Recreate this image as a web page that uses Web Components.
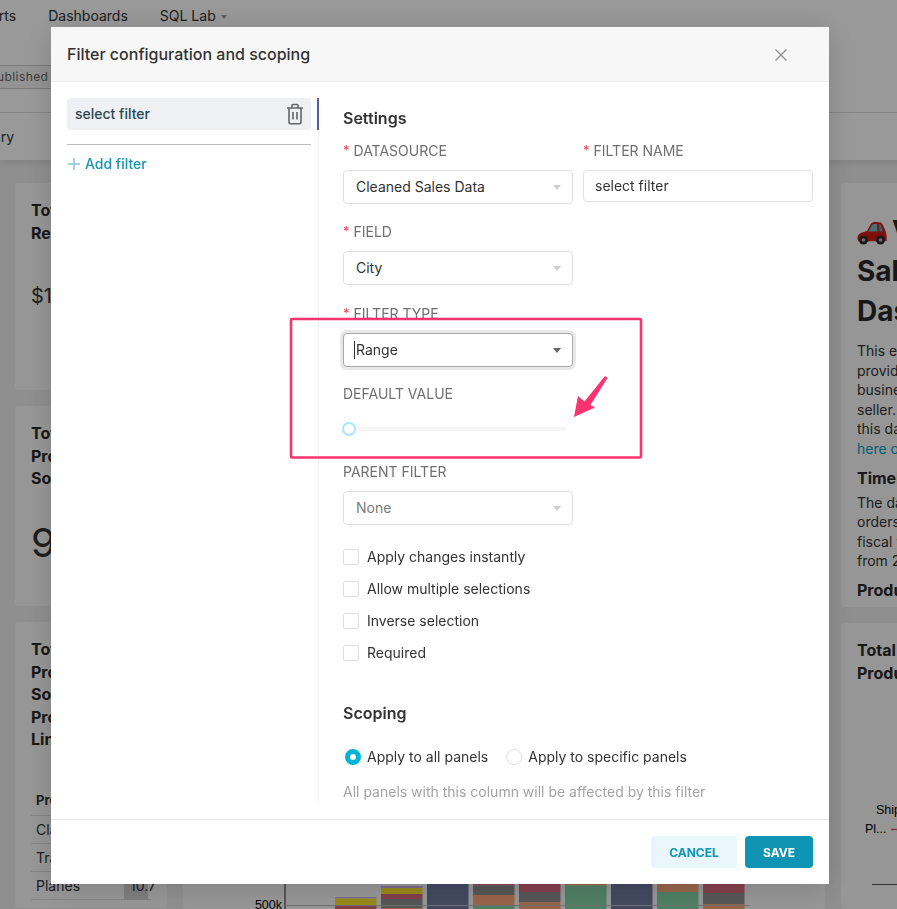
<!DOCTYPE html>
<html lang="en">
<head>
<meta charset="utf-8">
<title>Filter configuration and scoping</title>
<style>
    html, body { margin: 0; height: 909px; overflow: hidden; background: #efefef; }
    body { font-family: Inter, "Noto Sans", sans-serif; color: #323232; }
</style>
</head>
<body>
<dash-page>
    <dash-card slot="left" style="height:207px">
        <span slot="title">Total<br>Revenue</span>
        <div style="font-size:20px;line-height:28px;margin-top:38px;color:#323232">$10.0M</div>
    </dash-card>
    <dash-card slot="left" style="height:200px">
        <span slot="title">Total<br>Products<br>Sold</span>
        <div style="font-size:40px;line-height:50px;margin-top:28px;color:#323232">98K</div>
    </dash-card>
    <dash-card slot="left" style="height:286px">
        <span slot="title">Total<br>Products<br>Sold by<br>Product<br>Line</span>
        <product-table></product-table>
    </dash-card>

    <dash-card slot="middle" style="height:424px"><span slot="title"></span></dash-card>
    <dash-card slot="middle" style="height:286px"><stacked-chart></stacked-chart></dash-card>

    <dash-card slot="right" style="height:424px">
        <readme-panel></readme-panel>
    </dash-card>
    <dash-card slot="right" style="height:286px">
        <span slot="title">Total Sales by<br>Product Line</span>
        <pie-labels></pie-labels>
    </dash-card>
</dash-page>

<filter-modal></filter-modal>
<annotation-callout></annotation-callout>

<script>
// Dimmed dashboard behind the modal
class DashPage extends HTMLElement {
    constructor() {
        super();
        this.attachShadow({ mode: 'open' });
    }

    connectedCallback() {
        this.shadowRoot.innerHTML = `
            <style>
                :host { display: block; width: 1120px; font-size: 14px; }
                .top { background: #fff; height: 112px; border-bottom: 1px solid #dcdcdc; box-sizing: content-box; overflow: hidden; }
                nav { display: flex; gap: 32px; margin-left: -27.5px; padding-top: 6px; line-height: 20px; color: #323232; }
                .caret { display: inline-block; margin-left: 5px; vertical-align: middle; border: 3.5px solid transparent; border-top: 4px solid #999; border-bottom: 0; }
                .tag { display: inline-block; margin: 39px 0 0 -23px; padding: 0 4px 0 11px; width: 63px; height: 22px; line-height: 22px; border: 1px solid #ccc; border-radius: 3px; font-size: 12px; letter-spacing: .4px; color: #666; background: #f5f5f5; overflow: hidden; white-space: nowrap; }
                .tabs { background: #fff; height: 47px; line-height: 48px; margin-left: 0; box-shadow: 0 4px 6px rgba(0,0,0,.08); position: relative; overflow: hidden; }
                .tabs span { display: block; margin-left: -49px; }
                .grid { display: grid; grid-template-columns: 152px 642px 260px; gap: 16px; padding: 23px 0 0 15px; }
                .col { display: flex; flex-direction: column; gap: 16px; }
            </style>
            <div class="top">
                <nav><span>Charts</span><span>Dashboards</span><span>SQL Lab<i class="caret"></i></span></nav>
                <div class="tag">Published</div>
            </div>
            <div class="tabs"><span>Summary</span></div>
            <div class="grid">
                <div class="col"><slot name="left"></slot></div>
                <div class="col"><slot name="middle"></slot></div>
                <div class="col"><slot name="right"></slot></div>
            </div>
        `;
    }
}

class DashCard extends HTMLElement {
    constructor() {
        super();
        this.attachShadow({ mode: 'open' });
    }

    connectedCallback() {
        this.shadowRoot.innerHTML = `
            <style>
                :host { display: block; background: #fbfbfb; border-radius: 4px; padding: 16px; box-sizing: border-box; overflow: hidden; }
                .title { font-size: 16px; font-weight: 700; line-height: 22.5px; color: #282828; }
            </style>
            <div class="title"><slot name="title"></slot></div>
            <slot></slot>
        `;
    }
}

class ProductTable extends HTMLElement {
    constructor() {
        super();
        this.attachShadow({ mode: 'open' });
    }

    connectedCallback() {
        const rows = [['Classic Cars', '39.1'], ['Trains', '2.9'], ['Planes', '10.7']];
        this.shadowRoot.innerHTML = `
            <style>
                :host { display: block; margin-top: 35px; font-size: 14px; color: #323232; }
                .row { display: grid; grid-template-columns: 93px 27px; border-bottom: 1px solid #dcdcdc; height: 27px; box-sizing: content-box; line-height: 28px; }
                .row > div { padding-left: 5px; white-space: nowrap; overflow: hidden; }
                .head { font-weight: 700; font-size: 13px; height: 29px; }
                .num { background: #d2d2d2; width: 24px; box-sizing: border-box; padding-left: 6px !important; overflow: visible !important; }
            </style>
            <div class="row head"><div>Product</div><div>SUM</div></div>
            ${rows.map(([name, value]) => `
                <div class="row"><div>${name}</div><div class="num">${value}</div></div>
            `).join('')}
        `;
    }
}

class StackedChart extends HTMLElement {
    constructor() {
        super();
        this.attachShadow({ mode: 'open' });
    }

    connectedCallback() {
        const C = { n: '#707ba0', g: '#85d5a7', o: '#fca87b', r: '#dc697f', k: '#919191', y: '#ffe62b', p: '#ccb1f0' };
        // [x, [colour, top, bottom]...] in page pixels
        const bars = [
            [335, [['p', 897, 898.5], ['y', 898.5, 906], ['r', 906, 909]]],
            [381, [['p', 886, 888], ['y', 888, 894], ['r', 894, 899], ['k', 899, 908], ['o', 908, 909]]],
            [427, [['n', 880, 909]]],
            [473, [['r', 880, 885.5], ['k', 885.5, 895], ['o', 895, 906], ['g', 906, 909]]],
            [519, [['r', 880, 892], ['k', 892, 902], ['o', 902, 909]]],
            [565, [['o', 880, 885.5], ['g', 885.5, 909]]],
            [611, [['n', 880, 909]]],
            [657, [['o', 880, 892], ['g', 892, 909]]],
            [703, [['r', 880, 893], ['k', 893, 904], ['o', 904, 909]]],
        ];
        const rects = bars.map(([x, segs]) => segs.map(([c, a, b]) =>
            `<rect x="${x}" y="${a}" width="41.5" height="${b - a}" fill="${C[c]}"/>`).join('')).join('');
        this.shadowRoot.innerHTML = `
            <style>
                :host { display: block; margin: -16px; }
                svg { display: block; }
                text { font: 12.5px "Liberation Sans", Arial, sans-serif; fill: #000; }
            </style>
            <svg width="642" height="286" viewBox="183 623 642 286">
                <line x1="285" y1="640" x2="285" y2="909" stroke="#222" stroke-width="1"/>
                ${rects}
                <line x1="285" y1="905.5" x2="749" y2="905.5" stroke="#bbb" stroke-width="1"/>
                <text x="282" y="909" text-anchor="end">500k</text>
            </svg>
        `;
    }
}

class ReadmePanel extends HTMLElement {
    constructor() {
        super();
        this.attachShadow({ mode: 'open' });
    }

    connectedCallback() {
        this.shadowRoot.innerHTML = `
            <style>
                :host { display: block; font-size: 14px; line-height: 19.6px; color: #323232; white-space: nowrap; }
                h1 { margin: 12px 0 0; font-size: 28px; line-height: 40px; font-weight: 700; color: #282828; }
                h1 svg { vertical-align: -4px; margin-right: 5px; }
                p { margin: 10px 0 0; }
                h2 { margin: 8px 0 0; font-size: 16px; line-height: 22px; font-weight: 700; color: #282828; }
                h2 + p { margin-top: 4px; }
                a { color: #00a0c0; text-decoration: none; }
            </style>
            <h1><svg width="30" height="24" viewBox="0 0 30 24">
                <path d="M.5 18 C.5 14 2 12.5 5 11.5 L10 10 L13.5 3.5 C14.5 1.5 16 1 19 1 L23.5 1.5 C25.5 2 27 6 28.5 10 C29.7 13 30 16 29.5 20 L1.5 20.5 Z" fill="#d11b14"/>
                <path d="M11.5 10.5 L15 4 C15.7 3 17 3 18.5 3 L20 3 L20.5 10.5 Z" fill="#6fc0cc"/>
                <path d="M22 3 L23.5 3.5 L26 10.5 L22.5 10.5 Z" fill="#5aa5b5"/>
                <circle cx="6.5" cy="19" r="4.5" fill="#2b2b2b"/><circle cx="6.5" cy="19" r="1.8" fill="#bbb"/>
                <circle cx="23.5" cy="19" r="4.5" fill="#2b2b2b"/><circle cx="23.5" cy="19" r="1.8" fill="#bbb"/>
            </svg>Vehicle<br>Sales<br>Dashboard</h1>
            <p>This example dashboard<br>provides insight into the<br>business operations of a vehicle<br>seller. The dataset powering<br>this dashboard can be found<br><a href="#">here on Kaggle</a>.</p>
            <h2>Timeline</h2>
            <p>The dataset contains<br>orders across the<br>fiscal years, ranging<br>from 2003 to 2005.</p>
            <h2>Product Lines</h2>
        `;
    }
}

class PieLabels extends HTMLElement {
    constructor() {
        super();
        this.attachShadow({ mode: 'open' });
    }

    connectedCallback() {
        this.shadowRoot.innerHTML = `
            <style>
                :host { display: block; margin-left: -16px; }
                svg { display: block; }
                text { font: 12.5px "Liberation Sans", Arial, sans-serif; fill: #000; }
            </style>
            <svg width="260" height="225" viewBox="841 684 260 225">
                <text x="876" y="814">Ships</text>
                <text x="865" y="833">Pl...</text>
                <line x1="891" y1="829.5" x2="910" y2="829.5" stroke="#e0607c" stroke-width="1.3"/>
                <line x1="872" y1="884.5" x2="910" y2="884.5" stroke="#555" stroke-width="1"/>
            </svg>
        `;
    }
}

// Form bits used inside the modal
class FormLabel extends HTMLElement {
    constructor() {
        super();
        this.attachShadow({ mode: 'open' });
    }

    connectedCallback() {
        const req = this.hasAttribute('required');
        this.shadowRoot.innerHTML = `
            <style>
                :host { display: block; font-size: 14px; line-height: 20px; height: 20px; color: #6f6f6f; white-space: nowrap; }
                .star { color: #e04355; margin-right: 4px; font-size: 13px; line-height: 0; vertical-align: 1px; }
            </style>
            ${req ? '<span class="star">*</span>' : ''}<slot></slot>
        `;
    }
}

class ModalSelect extends HTMLElement {
    constructor() {
        super();
        this.attachShadow({ mode: 'open' });
    }

    connectedCallback() {
        this.shadowRoot.innerHTML = `
            <style>
                :host { display: flex; align-items: center; box-sizing: border-box; width: 230px; height: 34px; padding: 0 12px; margin-top: 9px; border: 1px solid #e0e0e0; border-radius: 4px; background: #fff; font-size: 14px; color: #323232; position: relative; }
                :host([focused]) { border-color: #a8a8a8; box-shadow: 0 0 0 3px #e8e8e8; }
                :host([disabled]) { background: #fff; color: #7a7a7a; }
                .text { flex: 1; padding-bottom: 2px; }
                .cursor { position: absolute; left: 10px; top: 7px; width: 1px; height: 18px; background: #323232; display: none; }
                :host([focused]) .cursor { display: block; }
                .caret { width: 0; height: 0; margin-right: -1px; border: 4.5px solid transparent; border-top: 5px solid #cfcfcf; border-bottom: 0; }
                :host([focused]) .caret { border-top-color: #666; }
            </style>
            <i class="cursor"></i>
            <span class="text"><slot></slot></span>
            <i class="caret"></i>
        `;
    }
}

class CheckRow extends HTMLElement {
    constructor() {
        super();
        this.attachShadow({ mode: 'open' });
    }

    connectedCallback() {
        this.shadowRoot.innerHTML = `
            <style>
                :host { display: flex; align-items: center; gap: 8px; height: 16px; font-size: 14px; color: #323232; white-space: nowrap; }
                .box { width: 16px; height: 16px; box-sizing: border-box; border: 1px solid #e0e0e0; border-radius: 2px; background: #fff; }
                .text { margin-top: -2px; }
            </style>
            <i class="box"></i><span class="text"><slot></slot></span>
        `;
    }
}

class RadioChoice extends HTMLElement {
    constructor() {
        super();
        this.attachShadow({ mode: 'open' });
    }

    connectedCallback() {
        this.shadowRoot.innerHTML = `
            <style>
                :host { display: inline-flex; align-items: center; gap: 6px; height: 16px; padding-left: 2px; font-size: 14px; color: #323232; white-space: nowrap; }
                .dot { width: 16px; height: 16px; box-sizing: border-box; border-radius: 50%; border: 1.5px solid #e0e0e0; background: #fff; }
                :host([checked]) .dot { border: 5px solid #00b4d8; }
                .text { margin-top: -2px; }
            </style>
            <i class="dot"></i><span class="text"><slot></slot></span>
        `;
    }
}

class RangeSlider extends HTMLElement {
    constructor() {
        super();
        this.attachShadow({ mode: 'open' });
    }

    connectedCallback() {
        this.shadowRoot.innerHTML = `
            <style>
                :host { display: flex; align-items: center; width: 225px; height: 14px; margin: 18px 0 0 -1px; }
                .thumb { flex: none; width: 14px; height: 14px; box-sizing: border-box; border: 2px solid #a6e9f5; border-radius: 50%; background: #fff; position: relative; z-index: 1; }
                .track { flex: 1; height: 4px; margin-left: -1px; background: #f5f5f5; border-radius: 2px; }
            </style>
            <i class="thumb"></i><i class="track"></i>
        `;
    }
}

class FilterModal extends HTMLElement {
    constructor() {
        super();
        this.attachShadow({ mode: 'open' });
    }

    connectedCallback() {
        this.shadowRoot.innerHTML = `
            <style>
                :host { position: fixed; inset: 0; display: block; background: rgba(0, 0, 0, .4); font-family: Inter, "Noto Sans", sans-serif; }
                .modal { position: absolute; left: 51px; top: 27px; width: 778px; height: 857px; display: flex; flex-direction: column; background: #fff; box-shadow: 0 4px 28px rgba(0, 0, 0, .16); }
                header { flex: none; height: 54px; box-sizing: content-box; display: flex; align-items: center; justify-content: space-between; padding: 0 42px 0 16px; background: #f7f7f7; border-bottom: 1px solid #efefef; font-size: 16px; font-weight: 500; color: #323232; }
                header svg { display: block; margin-top: 2px; }
                .body { flex: 1; display: flex; min-height: 0; padding: 16px 0; }
                aside { flex: none; width: 268px; box-sizing: border-box; padding-left: 16px; border-right: 1px solid #f0f0f0; }
                .tab-row { display: flex; gap: 6px; margin-right: -1px; }
                .tab { width: 244px; height: 32px; box-sizing: border-box; padding: 0 7px 0 8px; display: flex; align-items: center; justify-content: space-between; background: #eef0f4; border-radius: 4px; font-size: 14px; font-weight: 500; color: #2b4650; }
                .tab span { padding-bottom: 2px; }
                .tab svg { display: block; }
                .bar { width: 2px; height: 32px; background: #525fa0; }
                .sep { width: 244px; height: 1px; margin-top: 14px; background: #bcbcbc; }
                .add { display: flex; align-items: center; gap: 5px; margin-top: 9px; height: 20px; padding-left: 1px; font-size: 14px; font-weight: 500; color: #1a94ae; }
                .add span { padding-bottom: 2px; }
                .add svg { display: block; }
                main { flex: 1; padding: 9px 16px 0 24px; }
                h3 { margin: 0; font-size: 16px; line-height: 22px; font-weight: 600; color: #323232; }
                .pair { display: flex; gap: 10px; margin-top: 12px; }
                .name-input { box-sizing: border-box; width: 230px; height: 32px; margin-top: 9px; padding: 0 11px; line-height: 30px; border: 1px solid #e0e0e8; border-radius: 4px; font-size: 14px; color: #323232; }
                .gap18 { margin-top: 18px; }
                .gap19 { margin-top: 19px; }
                .gap17 { margin-top: 17px; }
                .gap26 { margin-top: 26px; }
                .checks { display: flex; flex-direction: column; gap: 16px; margin-top: 24px; }
                .scoping { margin-top: 41px; }
                .radios { display: flex; gap: 16px; margin-top: 25px; }
                .note { margin-top: 17px; font-size: 14px; line-height: 20px; color: #a3a3a3; white-space: nowrap; }
                footer { flex: none; height: 64px; box-sizing: content-box; border-top: 1px solid #e8e8e8; display: flex; align-items: center; justify-content: flex-end; gap: 8px; padding: 0 16px; }
                .btn { height: 32px; display: flex; align-items: center; justify-content: center; border-radius: 4px; font-size: 12px; font-weight: 700; }
                .cancel { width: 86px; background: #e9f6fb; color: #0f95b3; }
                .save { width: 68px; background: #0f95b3; color: #fff; }
            </style>
            <div class="modal" role="dialog">
                <header>
                    <span>Filter configuration and scoping</span>
                    <svg width="12" height="12" viewBox="0 0 12 12"><path d="M.5.5l11 11M11.5.5l-11 11" stroke="#8f8f8f" stroke-width="1.3" fill="none"/></svg>
                </header>
                <div class="body">
                    <aside>
                        <div class="tab-row">
                            <div class="tab">
                                <span>select filter</span>
                                <svg width="18" height="22" viewBox="0 0 18 22" fill="none" stroke="#666" stroke-width="1.6">
                                    <path d="M1 5h16M6 5V2.6C6 1.9 6.5 1.5 7 1.5h4c.6 0 1 .4 1 1.1V5"/>
                                    <path d="M3 5v14c0 1 .7 1.7 1.7 1.7h8.6c1 0 1.7-.7 1.7-1.7V5"/>
                                    <path d="M7 9v7.5M11 9v7.5"/>
                                </svg>
                            </div>
                            <i class="bar"></i>
                        </div>
                        <div class="sep"></div>
                        <div class="add">
                            <svg width="12" height="12" viewBox="0 0 12 12"><path d="M6 0v12M0 6h12" stroke="#83c5d4" stroke-width="1.4" fill="none"/></svg>
                            <span>Add filter</span>
                        </div>
                    </aside>
                    <main>
                        <h3>Settings</h3>
                        <div class="pair">
                            <div>
                                <form-label required>DATASOURCE</form-label>
                                <modal-select>Cleaned Sales Data</modal-select>
                            </div>
                            <div>
                                <form-label required>FILTER NAME</form-label>
                                <div class="name-input">select filter</div>
                            </div>
                        </div>
                        <form-label class="gap18" required>FIELD</form-label>
                        <modal-select>City</modal-select>
                        <form-label class="gap19" required>FILTER TYPE</form-label>
                        <modal-select focused>Range</modal-select>
                        <form-label class="gap17">DEFAULT VALUE</form-label>
                        <range-slider></range-slider>
                        <form-label class="gap26">PARENT FILTER</form-label>
                        <modal-select disabled>None</modal-select>
                        <div class="checks">
                            <check-row>Apply changes instantly</check-row>
                            <check-row>Allow multiple selections</check-row>
                            <check-row>Inverse selection</check-row>
                            <check-row>Required</check-row>
                        </div>
                        <h3 class="scoping">Scoping</h3>
                        <div class="radios">
                            <radio-choice checked>Apply to all panels</radio-choice>
                            <radio-choice>Apply to specific panels</radio-choice>
                        </div>
                        <div class="note">All panels with this column will be affected by this filter</div>
                    </main>
                </div>
                <footer>
                    <div class="btn cancel">CANCEL</div>
                    <div class="btn save">SAVE</div>
                </footer>
            </div>
        `;
    }
}

// Pink highlight and arrow drawn on top of the screenshot
class AnnotationCallout extends HTMLElement {
    constructor() {
        super();
        this.attachShadow({ mode: 'open' });
    }

    connectedCallback() {
        this.shadowRoot.innerHTML = `
            <style>
                :host { position: fixed; left: 289px; top: 317px; width: 354px; height: 143px; display: block; pointer-events: none; }
                svg { display: block; }
            </style>
            <svg width="354" height="143" viewBox="289 317 354 143">
                <rect x="291" y="319" width="350" height="138.5" fill="none" stroke="#fb3370" stroke-width="2.6" rx="1"/>
                <path d="M574 417 L578 396 L584.5 401.5 L605 376 L607.5 378 L590.5 405 L595 407.5 Z" fill="#fb3370"/>
            </svg>
        `;
    }
}

customElements.define('dash-page', DashPage);
customElements.define('dash-card', DashCard);
customElements.define('product-table', ProductTable);
customElements.define('stacked-chart', StackedChart);
customElements.define('readme-panel', ReadmePanel);
customElements.define('pie-labels', PieLabels);
customElements.define('form-label', FormLabel);
customElements.define('modal-select', ModalSelect);
customElements.define('check-row', CheckRow);
customElements.define('radio-choice', RadioChoice);
customElements.define('range-slider', RangeSlider);
customElements.define('filter-modal', FilterModal);
customElements.define('annotation-callout', AnnotationCallout);
</script>
</body>
</html>
